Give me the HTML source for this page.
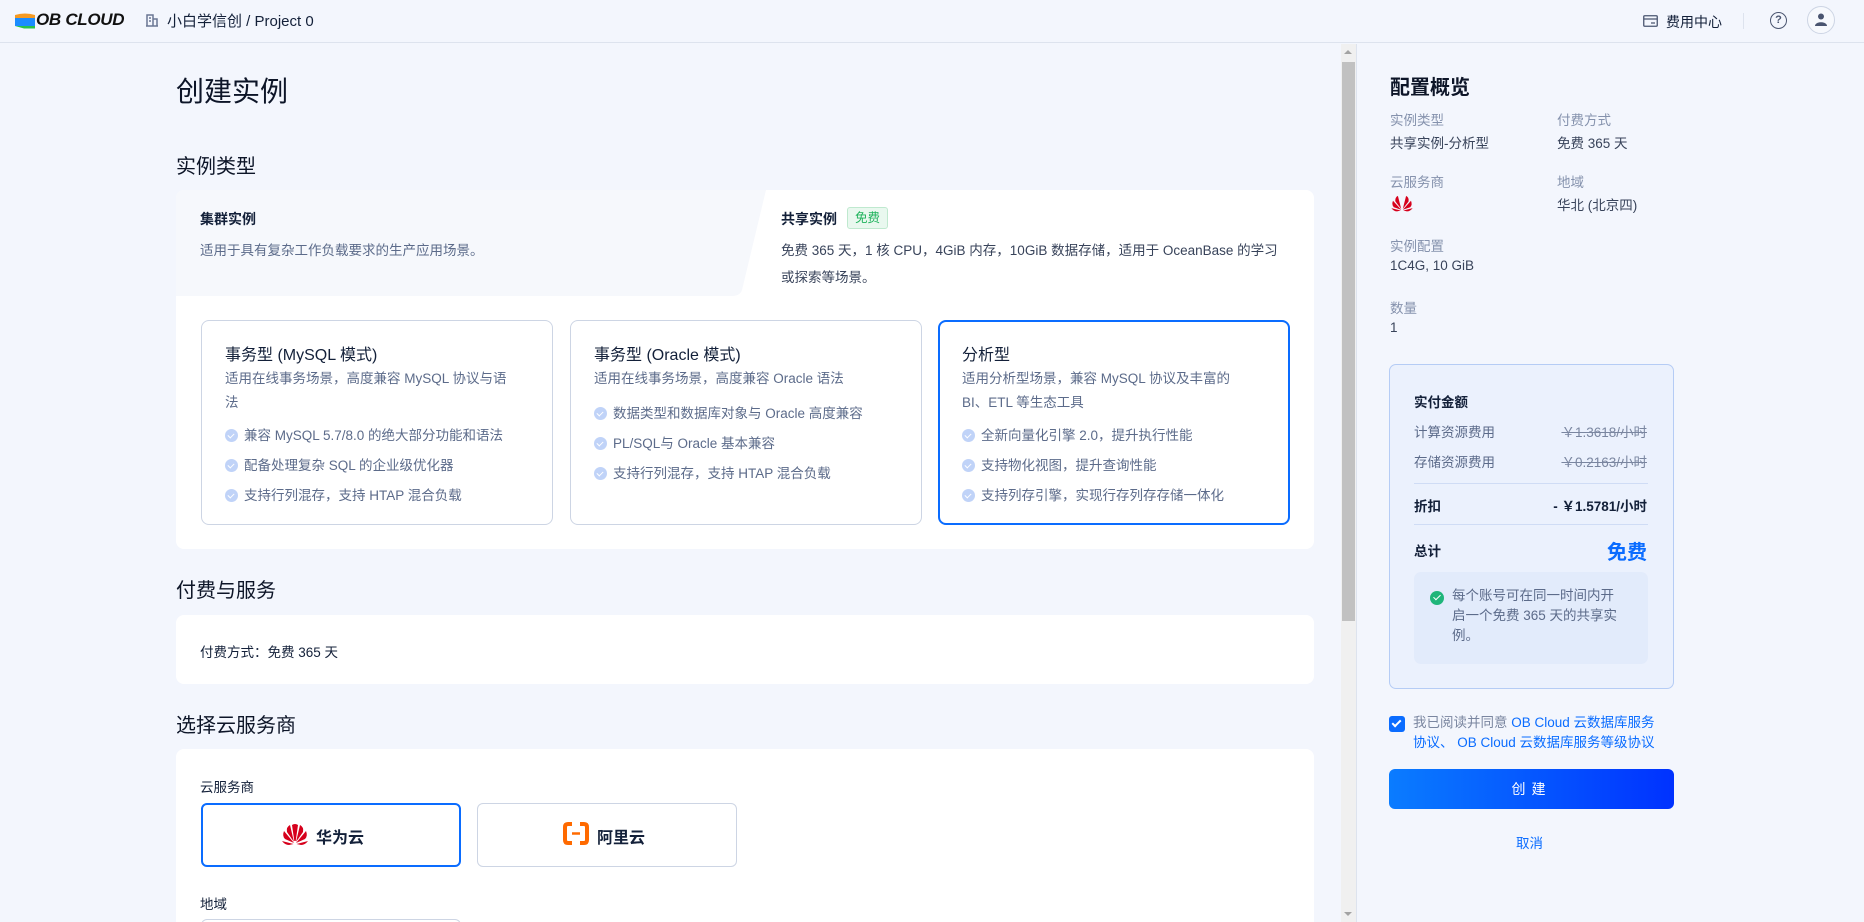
<!DOCTYPE html>
<html style="width:1864px;height:922px;overflow:hidden"><head><meta charset="utf-8"><style>
*{box-sizing:border-box;margin:0;padding:0}
body{width:1864px;height:922px;overflow:hidden;background:#f3f6fd;font-family:"Liberation Sans","Noto Sans CJK SC",sans-serif;color:#132039;position:relative;font-size:14px}
.a{position:absolute;white-space:nowrap}
.hdr{position:absolute;left:0;top:0;width:1864px;height:43px;border-bottom:1px solid #dde3ee;background:#f3f6fd}
.card{position:absolute;background:#fff;border-radius:8px}
.sub{position:absolute;top:320px;width:352px;height:205px;border:1px solid #cdd5e4;border-radius:8px;background:#fff}
.sub.sel{border:2px solid #0a6cff}
.sub h4{position:absolute;left:23px;top:20px;font-size:16px;font-weight:normal;color:#132039}
.sub p{position:absolute;left:23px;font-size:13.5px;color:#5c6b8a;line-height:24px;white-space:nowrap}
.dot{display:inline-block;width:13px;height:13px;border-radius:50%;background:#c0d3f8;vertical-align:-2px;margin-right:6px;position:relative}
.dot:after{content:"";position:absolute;left:4px;top:3px;width:3px;height:5px;border:solid #fff;border-width:0 1.5px 1.5px 0;transform:rotate(45deg)}
.lbl{color:#8592ad;font-size:13.5px}
.val{color:#38435a;font-size:13.5px}
</style></head><body>
<div class="hdr"></div>
<svg class="a" style="left:15px;top:12px" width="20" height="18" viewBox="0 0 20 18"><path d="M0 3h20v11H0z" fill="#1a8cff"/><path d="M0 3 Q10 0 20 3 v3 H0z" fill="#f59a23"/><path d="M0 14h20v2.5H9z" fill="#27c24c"/></svg>
<div class="a" style="left:36px;top:10px;font-size:17px;font-weight:bold;font-style:italic;letter-spacing:-0.3px;color:#111">OB CLOUD</div>
<svg class="a" style="left:146px;top:13px" width="12" height="14" viewBox="0 0 12 14"><path d="M1 13V2h6v11M7 6h4v7M3 5h2M3 8h2M0 13h12" stroke="#6b7794" stroke-width="1.5" fill="none"/></svg>
<div class="a" style="left:167px;top:10px;font-size:15px;color:#132039">小白学信创 / Project 0</div>
<svg class="a" style="left:1643px;top:15px" width="15" height="12"><rect x="0.75" y="0.75" width="13.5" height="10.5" rx="1" stroke="#4a5570" stroke-width="1.3" fill="none"/><path d="M1 4h13M8 8h4" stroke="#4a5570" stroke-width="1.3"/></svg>
<div class="a" style="left:1666px;top:12px;font-size:14px;color:#132039">费用中心</div>
<div class="a" style="left:1743px;top:13px;width:1px;height:16px;background:#dde3ee"></div>
<div class="a" style="left:1770px;top:12px;width:17px;height:17px;border:1.5px solid #4a5570;border-radius:50%;font-size:11px;text-align:center;line-height:14px;color:#4a5570;font-weight:bold">?</div>
<div class="a" style="left:1807px;top:6px;width:28px;height:28px;border:1px solid #cdd5e4;border-radius:50%;background:#f7f9fd"></div>
<svg class="a" style="left:1815px;top:13px" width="12" height="13"><circle cx="6" cy="3.5" r="3" fill="#4a5570"/><path d="M0 13c0-5 12-5 12 0z" fill="#4a5570"/></svg>

<div class="a" style="left:176px;top:70px;font-size:28px;color:#0d1528">创建实例</div>
<div class="a" style="left:176px;top:150px;font-size:20px;color:#0d1528">实例类型</div>
<div class="card" style="left:176px;top:190px;width:1138px;height:359px;overflow:hidden">
  <svg class="a" style="left:0;top:0" width="590" height="106"><path d="M0 0H590L566 100Q564 106 556 106H0z" fill="#f6f8fc"/></svg>
  <div class="a" style="left:24px;top:19px;font-size:14px;font-weight:bold">集群实例</div>
  <div class="a" style="left:24px;top:49px;font-size:13.5px;color:#5c6b8a">适用于具有复杂工作负载要求的生产应用场景。</div>
  <div class="a" style="left:605px;top:19px;font-size:14px;font-weight:bold">共享实例</div>
  <div class="a" style="left:671px;top:17px;width:41px;height:22px;border:1px solid #bfe9cf;background:#e9f8ef;border-radius:3px;color:#1fb35c;font-size:12.5px;text-align:center;line-height:20px">免费</div>
  <div class="a" style="left:605px;top:47px;font-size:13.5px;color:#38435a;line-height:27px">免费 365 天，1 核 CPU，4GiB 内存，10GiB 数据存储，适用于 OceanBase 的学习<br>或探索等场景。</div>
</div>
<div class="sub" style="left:201px"><h4>事务型 (MySQL 模式)</h4><p style="top:46px">适用在线事务场景，高度兼容 MySQL 协议与语<br>法</p><p style="top:103px"><span class="dot"></span>兼容 MySQL 5.7/8.0 的绝大部分功能和语法</p><p style="top:133px"><span class="dot"></span>配备处理复杂 SQL 的企业级优化器</p><p style="top:163px"><span class="dot"></span>支持行列混存，支持 HTAP 混合负载</p></div>
<div class="sub" style="left:570px"><h4>事务型 (Oracle 模式)</h4><p style="top:46px">适用在线事务场景，高度兼容 Oracle 语法</p><p style="top:81px"><span class="dot"></span>数据类型和数据库对象与 Oracle 高度兼容</p><p style="top:111px"><span class="dot"></span>PL/SQL与 Oracle 基本兼容</p><p style="top:141px"><span class="dot"></span>支持行列混存，支持 HTAP 混合负载</p></div>
<div class="sub sel" style="left:938px"><h4 style="left:22px;top:19px">分析型</h4><p style="top:45px;left:22px">适用分析型场景，兼容 MySQL 协议及丰富的<br>BI、ETL 等生态工具</p><p style="top:102px;left:22px"><span class="dot"></span>全新向量化引擎 2.0，提升执行性能</p><p style="top:132px;left:22px"><span class="dot"></span>支持物化视图，提升查询性能</p><p style="top:162px;left:22px"><span class="dot"></span>支持列存引擎，实现行存列存存储一体化</p></div>

<div class="a" style="left:176px;top:574px;font-size:20px;color:#0d1528">付费与服务</div>
<div class="card" style="left:176px;top:615px;width:1138px;height:69px"><div class="a" style="left:24px;top:26px;font-size:13.5px;color:#132039">付费方式：免费 365 天</div></div>
<div class="a" style="left:176px;top:709px;font-size:20px;color:#0d1528">选择云服务商</div>
<div class="card" style="left:176px;top:749px;width:1138px;height:173px;overflow:hidden;border-radius:8px 8px 0 0">
  <div class="a" style="left:24px;top:27px;font-size:13.5px">云服务商</div>
  <div class="a" style="left:25px;top:54px;width:260px;height:64px;border:2px solid #0a6cff;border-radius:6px"></div>
  <svg class="a" style="left:106px;top:73px" width="26" height="26" viewBox="0 0 26 26"><g fill="#d6001c"><path d="M12 20L8 3Q4 5 5 10z"/><path d="M14 20L18 3Q22 5 21 10z"/><path d="M12 21L2 9Q0 14 3 17z"/><path d="M14 21L24 9Q26 14 23 17z"/><path d="M11.5 22L0 19Q3 23 7 23z"/><path d="M14.5 22L26 19Q23 23 19 23z"/><path d="M12.3 19L10 3Q13 1 16 3L13.7 19z"/></g></svg>
  <div class="a" style="left:140px;top:75px;font-size:16px;font-weight:bold">华为云</div>
  <div class="a" style="left:301px;top:54px;width:260px;height:64px;border:1px solid #cdd5e4;border-radius:6px"></div>
  <svg class="a" style="left:387px;top:73px" width="26" height="23" viewBox="0 0 26 23"><path d="M9 2H5Q2 2 2 5V18Q2 21 5 21H9M17 2H21Q24 2 24 5V18Q24 21 21 21H17" stroke="#ff6a00" stroke-width="4" fill="none"/><path d="M9 11.5H17" stroke="#ff6a00" stroke-width="2.5"/></svg>
  <div class="a" style="left:421px;top:75px;font-size:16px;font-weight:bold">阿里云</div>
  <div class="a" style="left:24px;top:144px;font-size:13.5px">地域</div>
  <div class="a" style="left:25px;top:170px;width:260px;height:40px;border:1px solid #cdd5e4;border-radius:6px"></div>
</div>

<div class="a" style="left:1341px;top:44px;width:15px;height:878px;background:#f0f0f0"></div>
<div class="a" style="left:1342px;top:62px;width:13px;height:559px;background:#c1c1c1"></div>
<div class="a" style="left:1344px;top:50px;width:0;height:0;border:4px solid transparent;border-bottom:4px solid #a3a3a3;border-top:0"></div>
<div class="a" style="left:1344px;top:912px;width:0;height:0;border:4px solid transparent;border-top:4px solid #a3a3a3;border-bottom:0"></div>
<div class="a" style="left:1356px;top:44px;width:1px;height:878px;background:#dde3ee"></div>

<div class="a" style="left:1390px;top:71px;font-size:20px;font-weight:bold;color:#0d1528">配置概览</div>
<div class="a lbl" style="left:1390px;top:109px">实例类型</div><div class="a val" style="left:1390px;top:132px">共享实例-分析型</div>
<div class="a lbl" style="left:1557px;top:109px">付费方式</div><div class="a val" style="left:1557px;top:132px">免费 365 天</div>
<div class="a lbl" style="left:1390px;top:171px">云服务商</div>
<svg class="a" style="left:1390px;top:195px" width="24" height="18" viewBox="0 0 26 22"><g fill="#d6001c"><path d="M12 17L8 1Q4 3 5 8z"/><path d="M14 17L18 1Q22 3 21 8z"/><path d="M12 18L2 7Q0 12 3 15z"/><path d="M14 18L24 7Q26 12 23 15z"/><path d="M11.5 19L0 16Q3 20 7 20z"/><path d="M14.5 19L26 16Q23 20 19 20z"/></g></svg>
<div class="a lbl" style="left:1557px;top:171px">地域</div><div class="a val" style="left:1557px;top:194px">华北 (北京四)</div>
<div class="a lbl" style="left:1390px;top:235px">实例配置</div><div class="a val" style="left:1390px;top:258px">1C4G, 10 GiB</div>
<div class="a lbl" style="left:1390px;top:297px">数量</div><div class="a val" style="left:1390px;top:320px">1</div>

<div class="a" style="left:1389px;top:364px;width:285px;height:325px;background:#ebf1fd;border:1px solid #b5ccf5;border-radius:7px"></div>
<div class="a" style="left:1414px;top:391px;font-size:13.5px;font-weight:bold">实付金额</div>
<div class="a lbl" style="left:1414px;top:421px;color:#5c6b8a">计算资源费用</div><div class="a" style="right:217px;top:421px;font-size:13.5px;color:#7a86a0;text-decoration:line-through">￥1.3618/小时</div>
<div class="a lbl" style="left:1414px;top:451px;color:#5c6b8a">存储资源费用</div><div class="a" style="right:217px;top:451px;font-size:13.5px;color:#7a86a0;text-decoration:line-through">￥0.2163/小时</div>
<div class="a" style="left:1414px;top:483px;width:234px;height:1px;background:#cfdcf5"></div>
<div class="a" style="left:1414px;top:495px;font-size:13.5px;font-weight:bold">折扣</div><div class="a" style="right:217px;top:495px;font-size:13.5px;font-weight:bold">- ￥1.5781/小时</div>
<div class="a" style="left:1414px;top:524px;width:234px;height:1px;background:#cfdcf5"></div>
<div class="a" style="left:1414px;top:540px;font-size:13.5px;font-weight:bold">总计</div><div class="a" style="right:217px;top:536px;font-size:20px;font-weight:bold;color:#0a6cff">免费</div>
<div class="a" style="left:1414px;top:572px;width:234px;height:92px;background:#e2ebfb;border-radius:7px"></div>
<div class="a" style="left:1430px;top:591px;width:14px;height:14px;border-radius:50%;background:#1fb57a"></div>
<div class="a" style="left:1435px;top:593px;width:4px;height:7px;border:solid #fff;border-width:0 1.5px 1.5px 0;transform:rotate(45deg)"></div>
<div class="a" style="left:1452px;top:586px;font-size:13.5px;color:#5c6b8a;line-height:20px">每个账号可在同一时间内开<br>启一个免费 365 天的共享实<br>例。</div>

<div class="a" style="left:1389px;top:716px;width:16px;height:16px;background:#0a6cff;border-radius:3px"></div>
<div class="a" style="left:1394px;top:718px;width:5px;height:9px;border:solid #fff;border-width:0 2px 2px 0;transform:rotate(45deg)"></div>
<div class="a" style="left:1413px;top:713px;font-size:13.5px;line-height:20px;color:#0a6cff"><span style="color:#7a86a0">我已阅读并同意</span>  OB Cloud 云数据库服务<br>协议、  OB Cloud 云数据库服务等级协议</div>
<div class="a" style="left:1389px;top:769px;width:285px;height:40px;border-radius:6px;background:linear-gradient(90deg,#0a7cff,#0032ff);color:#fff;font-size:14px;text-align:center;line-height:40px;letter-spacing:6px">创建</div>
<div class="a" style="left:1516px;top:832px;font-size:13.5px;color:#0a6cff">取消</div>
</body></html>
